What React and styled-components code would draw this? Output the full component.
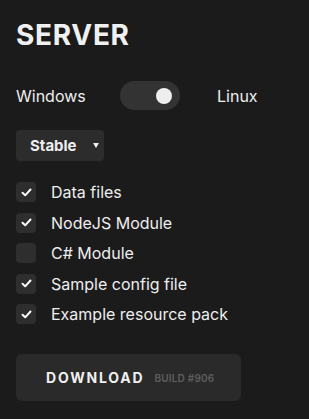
import styled, { createGlobalStyle } from "styled-components";

const GlobalStyle = createGlobalStyle`
  body {
    margin: 0;
    background: #1b1b1b;
    font-family: Inter, "Liberation Sans", sans-serif;
    color: #eeeeee;
  }
`;

const Panel = styled.div`
  display: flex;
  flex-direction: column;
  padding: 20px 16px;
  width: 309px;
  min-height: 419px;
  box-sizing: border-box;
`;

const Title = styled.h1`
  margin: 0;
  font-size: 28px;
  font-weight: 700;
  line-height: 30px;
  letter-spacing: 0.7px;
  color: #f0f0f0;
`;

const OsRow = styled.div`
  display: flex;
  align-items: center;
  margin-top: 31px;
  height: 29px;
`;

const OsLabel = styled.span`
  font-size: 16px;
  width: ${(p) => p.width}px;
`;

const Toggle = styled.div`
  width: 60px;
  height: 29px;
  border-radius: 15px;
  background: #333333;
  display: flex;
  align-items: center;
  justify-content: ${(p) => (p.on ? "flex-end" : "flex-start")};
  padding: 0 8px;
  box-sizing: border-box;
  margin-right: 37px;
`;

const Knob = styled.div`
  width: 16px;
  height: 16px;
  border-radius: 50%;
  background: #eeeeee;
`;

const Select = styled.div`
  margin-top: 20px;
  align-self: flex-start;
  display: flex;
  align-items: center;
  width: 88px;
  height: 31px;
  box-sizing: border-box;
  padding: 0 0 0 14px;
  background: #2c2c2c;
  border-radius: 4px;
  font-size: 15px;
  font-weight: 700;
`;

const Arrow = styled.span`
  margin-left: 16px;
  width: 0;
  height: 0;
  border-left: 3px solid transparent;
  border-right: 3px solid transparent;
  border-top: 5px solid #eeeeee;
`;

const List = styled.div`
  display: flex;
  flex-direction: column;
  gap: 10.5px;
  margin-top: 21px;
`;

const Row = styled.label`
  display: flex;
  align-items: center;
  gap: 15px;
  font-size: 16px;
  height: 20px;
`;

const Box = styled.span`
  width: 20px;
  height: 20px;
  border-radius: 4px;
  background: #2e2e2e;
  display: flex;
  align-items: center;
  justify-content: center;
`;

const DownloadButton = styled.button`
  margin-top: 30px;
  align-self: flex-start;
  width: 225px;
  height: 47px;
  border: none;
  border-radius: 6px;
  background: #2a2a2a;
  display: flex;
  align-items: center;
  padding: 0 0 0 30px;
  gap: 10px;
  font-family: inherit;
  cursor: pointer;
`;

const ButtonText = styled.span`
  color: #f0f0f0;
  font-size: 14px;
  font-weight: 700;
  letter-spacing: 1.8px;
`;

const Build = styled.span`
  color: #5e5e5e;
  font-size: 10px;
  font-weight: 600;
  letter-spacing: 0.2px;
`;

const Check = () => (
  <svg width="11" height="9" viewBox="0 0 11 9">
    <path
      d="M1.5 4.8 L4.2 7.3 L9.5 1.5"
      fill="none"
      stroke="#ffffff"
      strokeWidth="2"
      strokeLinecap="round"
      strokeLinejoin="round"
    />
  </svg>
);

const options = [
  { label: "Data files", checked: true },
  { label: "NodeJS Module", checked: true },
  { label: "C# Module", checked: false },
  { label: "Sample config file", checked: true },
  { label: "Example resource pack", checked: true },
];

export default function App() {
  return (
    <>
      <GlobalStyle />
      <Panel>
        <Title>SERVER</Title>
        <OsRow>
          <OsLabel width={104}>Windows</OsLabel>
          <Toggle on>
            <Knob />
          </Toggle>
          <OsLabel>Linux</OsLabel>
        </OsRow>
        <Select>
          Stable
          <Arrow />
        </Select>
        <List>
          {options.map((o) => (
            <Row key={o.label}>
              <Box>{o.checked && <Check />}</Box>
              {o.label}
            </Row>
          ))}
        </List>
        <DownloadButton>
          <ButtonText>DOWNLOAD</ButtonText>
          <Build>BUILD #906</Build>
        </DownloadButton>
      </Panel>
    </>
  );
}
